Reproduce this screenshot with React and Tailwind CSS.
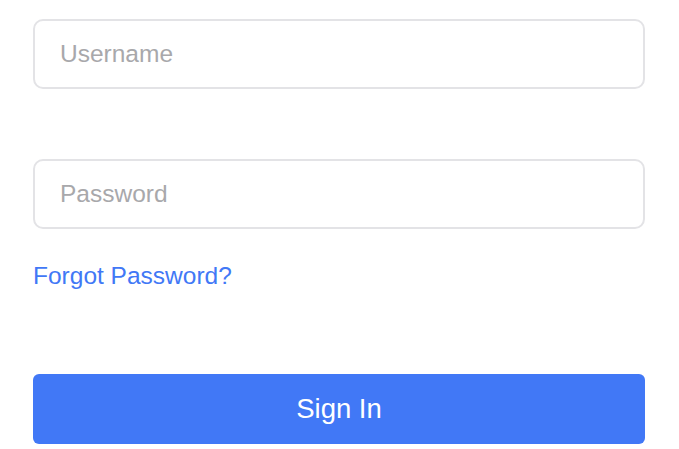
import React, { useState } from 'react';

const inputClass =
  'block h-[70px] w-full rounded-[10px] border-2 border-[#e3e3e6] bg-white px-[25px] text-[24.5px] text-[#333] outline-none placeholder:text-[#a8a8ab]';

export default function App() {
  const [username, setUsername] = useState('');
  const [password, setPassword] = useState('');

  return (
    <div
      className="min-h-[449px] w-full bg-white px-[33px] pt-[19px]"
      style={{ fontFamily: '"Liberation Sans", Arial, sans-serif' }}
    >
      <form onSubmit={(e) => e.preventDefault()} className="flex w-[612px] flex-col">
        <input
          type="text"
          placeholder="Username"
          value={username}
          onChange={(e) => setUsername(e.target.value)}
          className={inputClass}
        />
        <input
          type="password"
          placeholder="Password"
          value={password}
          onChange={(e) => setPassword(e.target.value)}
          className={`${inputClass} mt-[70px]`}
        />
        <a href="#" className="mt-[32px] self-start text-[24.5px] leading-[30px] text-[#4178f6]">
          Forgot Password?
        </a>
        <button
          type="submit"
          className="mt-[83px] h-[70px] w-full rounded-[6px] bg-[#4178f6] text-[27.5px] text-white"
        >
          Sign In
        </button>
      </form>
    </div>
  );
}
